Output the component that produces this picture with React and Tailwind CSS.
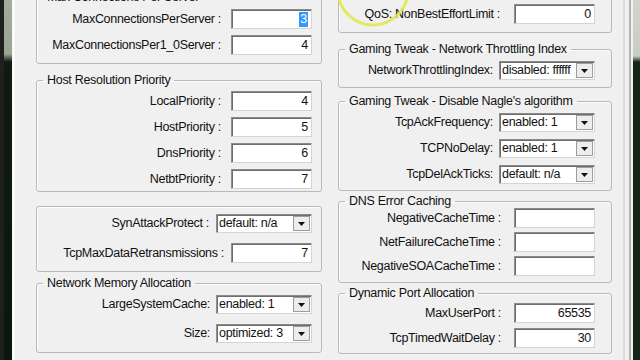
import clsx from 'clsx'

function Group({ title, className, children }) {
  return (
    <fieldset className={clsx('rounded-[3px] border border-[#b9b9b9] shadow-[inset_1px_1px_0_#fcfcfc]', className)}>
      {title ? <legend className="ml-[6px] px-[4px] leading-[14px]">{title}</legend> : null}
      {children}
    </fieldset>
  )
}

function TextBox({ value, highlight }) {
  return (
    <div className="flex h-[20px] w-[81px] shrink-0 items-center justify-end border border-t-[#8a8a8a] border-l-[#8f8f8f] border-r-[#d4d4d4] border-b-[#d4d4d4] bg-white pr-[3px] shadow-[inset_1px_1px_0_#6e6e6e]">
      {highlight ? (
        <span className="bg-[#3399ff] px-[1px] leading-[15px] text-white">{value}</span>
      ) : (
        <span>{value}</span>
      )}
    </div>
  )
}

function Select({ value }) {
  return (
    <div className="flex h-[19px] w-[96px] shrink-0 items-center border border-t-[#8a8a8a] border-l-[#8f8f8f] border-r-[#d4d4d4] border-b-[#d4d4d4] bg-white pl-[2px] shadow-[inset_1px_1px_0_#6e6e6e]">
      <span className="flex-1 whitespace-nowrap">{value}</span>
      <div className="mr-[1px] flex h-[15px] w-[17px] items-center justify-center border border-[#9d9d9d] bg-[#ededed]">
        <svg width="7" height="4" viewBox="0 0 7 4">
          <path d="M0 0H7L3.5 4Z" fill="#111" />
        </svg>
      </div>
    </div>
  )
}

function Row({ label, gap, children }) {
  return (
    <div className="flex items-center justify-end">
      <span className={clsx('whitespace-nowrap', gap)}>{label}</span>
      {children}
    </div>
  )
}

export default function App() {
  return (
    <div className="relative flex h-[360px] w-[640px] overflow-hidden font-['Liberation_Sans','Arial',sans-serif] text-[12.5px] tracking-[-0.3px] text-[#111]">
      {/* desktop strip left */}
      <div className="flex w-[12px] shrink-0">
        <div className="w-[4px] bg-[#1c211c]" />
        <div className="flex-1 bg-[linear-gradient(#a3ab9b_0,#9aa592_54px,#101a11_62px,#0b160d_100%)]" />
      </div>

      {/* window */}
      <div className="flex flex-1 border-l-[3px] border-l-[#fafafa] bg-[#f0f0f0] pl-[21px]">
        {/* left column */}
        <div className="-mt-[10px] flex w-[286px] shrink-0 flex-col">
          <Group title="Max Connections Per Server">
            <div className="flex flex-col gap-[6px] pr-[9px] pt-[5px] pb-[8px]">
              <Row label="MaxConnectionsPerServer :" gap="mr-[10px]">
                <TextBox value="3" highlight />
              </Row>
              <Row label="MaxConnectionsPer1_0Server :" gap="mr-[10px]">
                <TextBox value="4" />
              </Row>
            </div>
          </Group>

          <Group title="Host Resolution Priority" className="mt-[9px]">
            <div className="flex flex-col gap-[6px] pr-[9px] pt-[4px] pb-[2px]">
              <Row label="LocalPriority :" gap="mr-[10px]">
                <TextBox value="4" />
              </Row>
              <Row label="HostPriority :" gap="mr-[10px]">
                <TextBox value="5" />
              </Row>
              <Row label="DnsPriority :" gap="mr-[10px]">
                <TextBox value="6" />
              </Row>
              <Row label="NetbtPriority :" gap="mr-[10px]">
                <TextBox value="7" />
              </Row>
            </div>
          </Group>

          <Group className="mt-[14px]">
            <div className="flex flex-col gap-[10px] pr-[9px] pt-[7px] pb-[8px]">
              <Row label="SynAttackProtect :" gap="mr-[7px]">
                <Select value="default: n/a" />
              </Row>
              <Row label="TcpMaxDataRetransmissions :" gap="mr-[7px]">
                <TextBox value="7" />
              </Row>
            </div>
          </Group>

          <Group title="Network Memory Allocation" className="mt-[4px]">
            <div className="flex flex-col gap-[10px] pr-[9px] pt-[5px] pb-[9px]">
              <Row label="LargeSystemCache:" gap="mr-[6px]">
                <Select value="enabled: 1" />
              </Row>
              <Row label="Size:" gap="mr-[6px]">
                <Select value="optimized: 3" />
              </Row>
            </div>
          </Group>
        </div>

        {/* right column */}
        <div className="-mt-[25px] ml-[16px] flex w-[274px] shrink-0 flex-col">
          <Group className="pt-[14px]">
            <div className="flex flex-col pr-[16px] pt-[14px] pb-[8px]">
              <Row label="QoS: NonBestEffortLimit :" gap="mr-[14px]">
                <TextBox value="0" />
              </Row>
            </div>
          </Group>

          <Group title="Gaming Tweak - Network Throttling Index" className="mt-[9px]">
            <div className="flex flex-col pr-[16px] pt-[5px] pb-[7px]">
              <Row label="NetworkThrottlingIndex:" gap="mr-[6px]">
                <Select value="disabled: ffffff" />
              </Row>
            </div>
          </Group>

          <Group title="Gaming Tweak - Disable Nagle's algorithm" className="mt-[6px]">
            <div className="flex flex-col gap-[7px] pr-[16px] pt-[5px] pb-[6px]">
              <Row label="TcpAckFrequency:" gap="mr-[6px]">
                <Select value="enabled: 1" />
              </Row>
              <Row label="TCPNoDelay:" gap="mr-[6px]">
                <Select value="enabled: 1" />
              </Row>
              <Row label="TcpDelAckTicks:" gap="mr-[6px]">
                <Select value="default: n/a" />
              </Row>
            </div>
          </Group>

          <Group title="DNS Error Caching" className="mt-[3px]">
            <div className="flex flex-col gap-[4px] pr-[16px] pb-[6px]">
              <Row label="NegativeCacheTime :" gap="mr-[13px]">
                <TextBox value="" />
              </Row>
              <Row label="NetFailureCacheTime :" gap="mr-[13px]">
                <TextBox value="" />
              </Row>
              <Row label="NegativeSOACacheTime :" gap="mr-[13px]">
                <TextBox value="" />
              </Row>
            </div>
          </Group>

          <Group title="Dynamic Port Allocation" className="mt-[3px]">
            <div className="flex flex-col gap-[5px] pr-[16px] pt-[3px] pb-[5px]">
              <Row label="MaxUserPort :" gap="mr-[13px]">
                <TextBox value="65535" />
              </Row>
              <Row label="TcpTimedWaitDelay :" gap="mr-[13px]">
                <TextBox value="30" />
              </Row>
            </div>
          </Group>
        </div>

        {/* window frame right */}
        <div className="ml-[11px] w-[2px] bg-[#dcdcdc]" />
        <div className="ml-[4px] w-[2px] bg-[#b3b3b3]" />
      </div>

      {/* desktop strip right */}
      <div className="w-[7px] shrink-0 bg-[linear-gradient(#d2d4d0_0,#c9ccc6_56px,#16241a_62px,#12251a_100%)]" />

      {/* cursor highlight */}
      <svg className="pointer-events-none absolute left-[330px] top-0" width="90" height="40" viewBox="0 0 90 40">
        <circle cx="43" cy="-10" r="35" fill="none" stroke="#e2e84a" strokeWidth="3" opacity="0.9" />
      </svg>
    </div>
  )
}
